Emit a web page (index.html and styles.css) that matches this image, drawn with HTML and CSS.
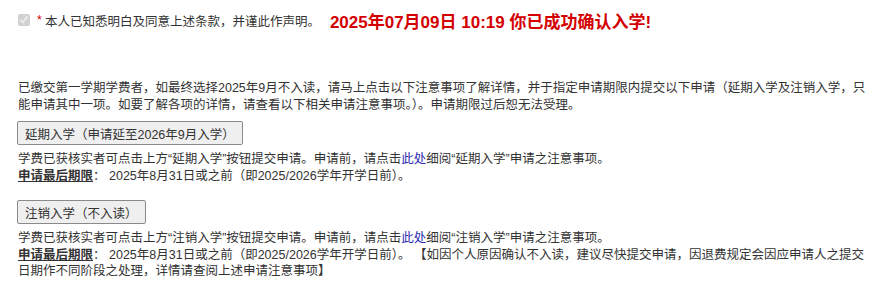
FILE: index.html
```html
<!DOCTYPE html>
<html lang="zh-CN">

<head>
    <meta charset="UTF-8">
    <meta name="viewport" content="width=device-width, initial-scale=1.0">
    <title>确认入学</title>
    <link rel="stylesheet" href="styles.css">
</head>

<body>
    <div class="page">
        <div class="agree">
            <input type="checkbox" class="agree-box" checked disabled>
            <span class="star">*</span>
            <span class="agree-text">本人已知悉明白及同意上述条款，并谨此作声明。</span>
            <span class="done">2025年07月09日 10:19 你已成功确认入学!</span>
        </div>

        <p class="intro">已缴交第一学期学费者，如最终选择2025年9月不入读，请马上点击以下注意事项了解详情，并于指定申请期限内提交以下申请（延期入学及注销入学，只能申请其中一项。如要了解各项的详情，请查看以下相关申请注意事项。）。申请期限过后恕无法受理。</p>

        <div class="section">
            <button type="button" class="apply-btn">延期入学（申请延至2026年9月入学）</button>
            <p class="note">学费已获核实者可点击上方“延期入学”按钮提交申请。申请前，请点击<a href="#" class="here">此处</a>细阅“延期入学”申请之注意事项。<br>
                <span class="deadline">申请最后期限</span>： 2025年8月31日或之前（即2025/2026学年开学日前）。</p>
        </div>

        <div class="section">
            <button type="button" class="apply-btn">注销入学（不入读）</button>
            <p class="note">学费已获核实者可点击上方“注销入学”按钮提交申请。申请前，请点击<a href="#" class="here">此处</a>细阅“注销入学”申请之注意事项。<br>
                <span class="deadline">申请最后期限</span>： 2025年8月31日或之前（即2025/2026学年开学日前）。 【如因个人原因确认不入读，建议尽快提交申请，因退费规定会因应申请人之提交日期作不同阶段之处理，详情请查阅上述申请注意事项】</p>
        </div>
    </div>
</body>

</html>
```

FILE: styles.css
```css
body {
    margin: 0;
    padding: 0;
    background-color: #fff;
    font-family: "Liberation Sans", "Noto Sans CJK SC", sans-serif;
    font-size: 12.5px;
    color: #333;
}

.page {
    padding: 11px 0 0 18px;
    width: 856px;
}

.agree {
    display: flex;
    align-items: center;
    height: 18px;
}

.agree-box {
    margin: 0;
    width: 12px;
    height: 12px;
}

.star {
    color: #d00;
    margin: 0 3px 0 7px;
}

.agree-text {
    color: #333;
}

.done {
    margin-left: 10px;
    color: #d40000;
    font-size: 17px;
    font-weight: bold;
}

.intro {
    margin: 51px 0 7px 0;
    line-height: 17px;
}

.section {
    margin-bottom: 16px;
}

.apply-btn {
    display: block;
    font-family: inherit;
    font-size: 12.5px;
    color: #333;
    background-color: #efefef;
    border: 1px solid #8a8a8a;
    border-radius: 2px;
    padding: 2px 7px;
    height: 24px;
    margin-left: -1px;
}

.note {
    margin: 6px 0 0 0;
    line-height: 16.5px;
}

.here {
    color: #2a2ab0;
    text-decoration: none;
}

.deadline {
    font-weight: bold;
    text-decoration: underline;
}
```
